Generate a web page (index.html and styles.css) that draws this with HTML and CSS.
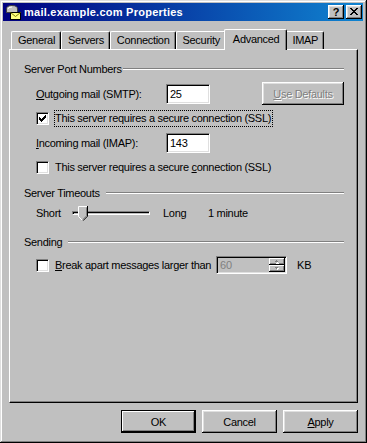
FILE: index.html
```html
<!DOCTYPE html>
<html lang="en">
<head>
    <meta charset="UTF-8">
    <title>mail.example.com Properties</title>
    <link rel="stylesheet" href="styles.css">
</head>
<body>
<div class="window">
    <div class="titlebar">
        <svg class="title-icon" width="16" height="16" viewBox="0 0 16 16">
            <path d="M1.5 8.5 V5 Q1.5 1.5 7 1.5 Q12.5 1.5 12.5 5 V8.5 Z" fill="#c0c0c0" stroke="#404040"/>
            <path d="M3 5 Q3 3 7 3" fill="none" stroke="#fff"/>
            <rect x="5.5" y="8.5" width="10" height="7" fill="#ffff80" stroke="#000"/>
            <path d="M5.5 8.5 L10.5 12.5 L15.5 8.5" fill="none" stroke="#808000"/>
        </svg>
        <span class="title-text">mail.example.com Properties</span>
        <div class="cap-btn cap-help">?</div>
        <div class="cap-btn cap-close">
            <svg width="8" height="7" viewBox="0 0 8 7" shape-rendering="crispEdges">
                <path d="M0 0h2v1h-2z M6 0h2v1h-2z M1 1h2v1h-2z M5 1h2v1h-2z M2 2h4v1h-4z M3 3h2v1h-2z M2 4h4v1h-4z M1 5h2v1h-2z M5 5h2v1h-2z M0 6h2v1h-2z M6 6h2v1h-2z" fill="#000"/>
            </svg>
        </div>
    </div>

    <div class="content">
        <div class="tabs">
            <div class="tab">General</div>
            <div class="tab">Servers</div>
            <div class="tab">Connection</div>
            <div class="tab">Security</div>
            <div class="tab active">Advanced</div>
            <div class="tab">IMAP</div>
        </div>

        <div class="panel">
            <div class="group-title first"><span>Server Port Numbers</span><div class="rule"></div></div>

            <div class="row field-row">
                <span class="label"><u>O</u>utgoing mail (SMTP):</span>
                <div class="textbox">25</div>
                <div class="btn btn-defaults disabled"><span><u>U</u>se Defaults</span></div>
            </div>

            <div class="row check-row">
                <div class="checkbox">
                    <svg width="7" height="7" viewBox="0 0 7 7" shape-rendering="crispEdges">
                        <path d="M0 2h1v3h-1z M1 3h1v3h-1z M2 4h1v3h-1z M3 3h1v3h-1z M4 2h1v3h-1z M5 1h1v3h-1z M6 0h1v3h-1z" fill="#000"/>
                    </svg>
                </div>
                <span class="check-label focus">This server requires a secure connection (SSL)</span>
            </div>

            <div class="row field-row">
                <span class="label"><u>I</u>ncoming mail (IMAP):</span>
                <div class="textbox">143</div>
            </div>

            <div class="row check-row">
                <div class="checkbox"></div>
                <span class="check-label">This server requires a secure <u>c</u>onnection (SSL)</span>
            </div>

            <div class="group-title timeouts"><span>Server Timeouts</span><div class="rule"></div></div>

            <div class="row slider-row">
                <span class="short">Short</span>
                <div class="slider">
                    <div class="track"></div>
                    <svg class="thumb" width="10" height="15" viewBox="0 0 10 15">
                        <path d="M0.5 0.5 H9.5 V10 L5 14.5 L0.5 10 Z" fill="#c0c0c0"/>
                        <path d="M0.5 10.5 V0.5 H9" fill="none" stroke="#fff"/>
                        <path d="M0.5 10.5 L4.5 14.5" fill="none" stroke="#fff"/>
                        <path d="M9.5 0 V10.2 L5 14.7" fill="none" stroke="#000"/>
                        <path d="M8.5 1.5 V9.8 L5 13.3" fill="none" stroke="#808080"/>
                    </svg>
                </div>
                <span class="long">Long</span>
                <span>1 minute</span>
            </div>

            <div class="group-title sending"><span>Sending</span><div class="rule"></div></div>

            <div class="row check-row last-row">
                <div class="checkbox"></div>
                <span class="check-label"><u>B</u>reak apart messages larger than</span>
                <div class="spin">
                    <span class="spin-value">60</span>
                    <div class="spin-btns">
                        <div class="spin-btn">
                            <svg width="6" height="4" viewBox="0 0 6 4" shape-rendering="crispEdges">
                                <path d="M2 1h1v1h-1z M1 2h3v1h-3z" fill="#fff" transform="translate(1 1)"/>
                                <path d="M2 0h1v1h-1z M1 1h3v1h-3z" fill="#808080"/>
                            </svg>
                        </div>
                        <div class="spin-btn">
                            <svg width="6" height="4" viewBox="0 0 6 4" shape-rendering="crispEdges">
                                <path d="M1 0h3v1h-3z M2 1h1v1h-1z" fill="#fff" transform="translate(1 1)"/>
                                <path d="M1 0h3v1h-3z M2 1h1v1h-1z" fill="#808080"/>
                            </svg>
                        </div>
                    </div>
                </div>
                <span class="kb">KB</span>
            </div>
        </div>

        <div class="buttons">
            <div class="btn default">OK</div>
            <div class="btn">Cancel</div>
            <div class="btn"><span><u>A</u>pply</span></div>
        </div>
    </div>
</div>
</body>
</html>
```

FILE: styles.css
```css
body {
    margin: 0;
    background: #c0c0c0;
    font-family: "Liberation Sans", Arial, sans-serif;
    font-size: 11px;
    letter-spacing: -0.3px;
    color: #000;
}

.window {
    width: 367px;
    height: 443px;
    box-sizing: border-box;
    padding: 3px 4px 3px 3px;
    background: #c0c0c0;
    box-shadow: inset -1px -1px #000, inset 1px 1px #dfdfdf,
                inset -2px -2px #808080, inset 2px 2px #fff;
}

/* title bar */
.titlebar {
    height: 18px;
    display: flex;
    align-items: center;
    background: linear-gradient(to right, #000080, #1084d0);
    color: #fff;
}

.title-icon {
    display: block;
    margin: 0 3px 0 2px;
}

.title-text {
    flex: 1;
    font-weight: bold;
    letter-spacing: 0.25px;
}

.cap-btn {
    width: 16px;
    height: 14px;
    box-sizing: border-box;
    background: #c0c0c0;
    color: #000;
    box-shadow: inset -1px -1px #000, inset 1px 1px #fff,
                inset -2px -2px #808080, inset 2px 2px #dfdfdf;
}

.cap-help {
    margin-right: 2px;
    font-weight: bold;
    text-align: center;
    line-height: 14px;
    letter-spacing: 0;
}

.cap-close {
    margin-right: 1px;
}

.cap-close svg {
    display: block;
    margin: 3px 0 0 4px;
}

/* tabs */
.content {
    padding: 8px 5px 0 6px;
}

.tabs {
    display: flex;
    align-items: flex-end;
    height: 20px;
    padding-left: 2px;
    position: relative;
    z-index: 1;
}

.tab {
    height: 18px;
    box-sizing: border-box;
    padding: 2px 5px 0 6px;
    line-height: 13px;
    background: #c0c0c0;
    border-top: 1px solid #fff;
    border-left: 1px solid #fff;
    border-right: 1px solid #000;
    border-radius: 2px 2px 0 0;
    box-shadow: inset -1px 0 #808080;
}

.tab.active {
    height: 21px;
    margin: 0 -2px -1px;
    padding: 3px 7px 0 8px;
    position: relative;
}

/* page panel */
.panel {
    height: 354px;
    box-sizing: border-box;
    border: 1px solid;
    border-color: #fff #000 #000 #fff;
    box-shadow: inset -1px -1px #808080;
    padding: 0 13px 0 14px;
}

.group-title {
    display: flex;
    align-items: center;
    height: 14px;
}

.group-title .rule {
    flex: 1;
    margin-left: 6px;
    border-top: 1px solid #808080;
    border-bottom: 1px solid #fff;
}

.group-title.first {
    margin-top: 12px;
}

.group-title.first .rule {
    margin-left: 1px;
}

.group-title.timeouts {
    margin-top: 9px;
}

.group-title.sending {
    margin-top: 12px;
}

.row {
    display: flex;
    align-items: center;
    padding-left: 12px;
}

.field-row {
    height: 23px;
    margin-top: 6px;
}

.check-row + .field-row {
    margin-top: 3px;
}

.label {
    width: 130px;
}

.textbox {
    width: 44px;
    height: 20px;
    box-sizing: border-box;
    padding: 0 3px;
    line-height: 18px;
    background: #fff;
    border: 1px solid;
    border-color: #808080 #fff #fff #808080;
    box-shadow: inset 1px 1px #000, inset -1px -1px #dfdfdf;
}

.check-row {
    height: 20px;
    margin-top: 3px;
}

.checkbox {
    width: 13px;
    height: 13px;
    box-sizing: border-box;
    margin-right: 5px;
    background: #fff;
    border: 1px solid;
    border-color: #808080 #fff #fff #808080;
    box-shadow: inset 1px 1px #000, inset -1px -1px #dfdfdf;
}

.checkbox svg {
    display: block;
    margin: 2px 0 0 2px;
}

.check-label {
    border: 1px dotted transparent;
    padding: 1px 1px 1px 0;
    line-height: 13px;
}

.check-label.focus {
    border-color: #000;
}

/* slider */
.slider-row {
    height: 20px;
    margin-top: 3px;
}

.short {
    width: 36px;
}

.slider {
    position: relative;
    width: 78px;
    height: 20px;
    display: flex;
    align-items: center;
}

.track {
    flex: 1;
    height: 4px;
    box-sizing: border-box;
    border: 1px solid;
    border-color: #808080 #fff #fff #808080;
    box-shadow: inset 1px 1px #000;
    margin-top: -1px;
}

.thumb {
    position: absolute;
    left: 6px;
    top: 3px;
}

.long {
    margin-left: 13px;
    width: 45px;
}

/* spin box */
.last-row {
    margin-top: 6px;
}

.spin {
    display: flex;
    width: 71px;
    height: 18px;
    box-sizing: border-box;
    margin-left: 3px;
    border: 1px solid;
    border-color: #808080 #fff #fff #808080;
    box-shadow: inset 1px 1px #000, inset -1px -1px #dfdfdf;
    padding: 2px 2px 2px 2px;
}

.spin-value {
    flex: 1;
    color: #808080;
    line-height: 12px;
    padding-left: 1px;
}

.spin-btns {
    width: 16px;
    display: flex;
    flex-direction: column;
    margin: -1px -1px -1px 0;
}

.spin-btn {
    flex: 1;
    display: flex;
    align-items: center;
    justify-content: center;
    background: #c0c0c0;
    box-shadow: inset -1px -1px #000, inset 1px 1px #fff, inset -2px -2px #808080;
}

.kb {
    margin-left: 10px;
}

/* buttons */
.btn {
    width: 75px;
    height: 23px;
    box-sizing: border-box;
    display: flex;
    align-items: center;
    justify-content: center;
    background: #c0c0c0;
    box-shadow: inset -1px -1px #000, inset 1px 1px #fff,
                inset -2px -2px #808080, inset 2px 2px #dfdfdf;
}

.btn.default {
    box-shadow: inset 0 0 0 1px #000, inset -2px -2px #000,
                inset 2px 2px #fff, inset -3px -3px #808080;
}

.btn-defaults {
    margin-left: auto;
    width: 82px;
}

.btn.disabled {
    color: #808080;
    text-shadow: 1px 1px #fff;
}

.buttons {
    display: flex;
    justify-content: flex-end;
    gap: 6px;
    margin-top: 7px;
}
```
